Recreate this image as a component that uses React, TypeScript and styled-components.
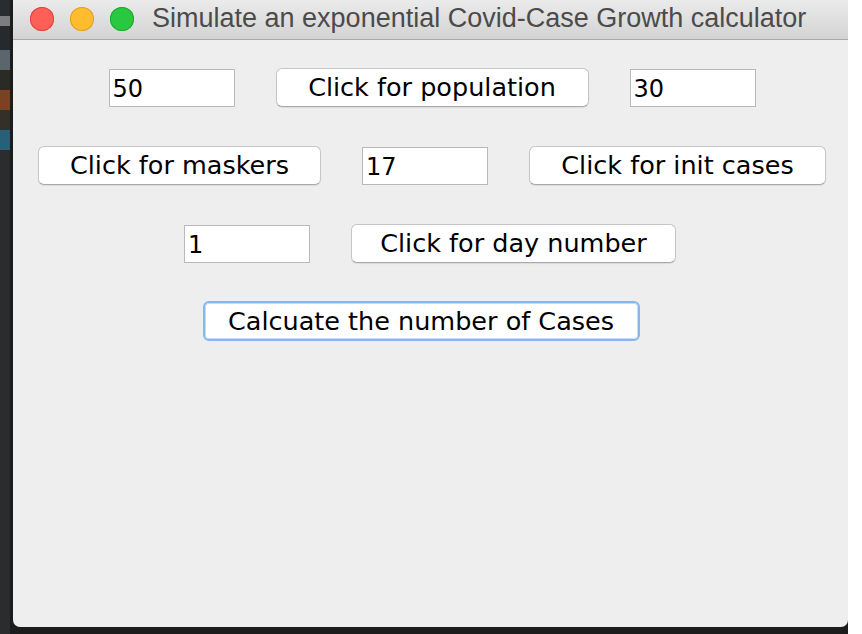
import React from "react";
import styled, { createGlobalStyle } from "styled-components";

const Global = createGlobalStyle`
  html, body { margin: 0; padding: 0; background: #ffffff; overflow: hidden; }
  #root { width: 862px; height: 634px; }
`;

const Desktop = styled.div`
  display: flex;
  width: 848px;
  height: 634px;
  background: #1c1c1c;
  align-items: flex-start;
`;

const SideStrip = styled.div`
  width: 10px;
  height: 634px;
  margin-right: 3px;
  background: linear-gradient(
    to bottom,
    #2a2d2f 0px, #2a2d2f 16px,
    #7b7d7f 16px, #7b7d7f 26px,
    #262a2c 26px, #262a2c 50px,
    #5a666b 50px, #5a666b 70px,
    #2b2a24 70px, #2b2a24 90px,
    #7a4220 90px, #7a4220 110px,
    #332f29 110px, #332f29 130px,
    #28607a 130px, #28607a 150px,
    #2a2c2e 150px, #2a2c2e 634px
  );
`;

const Window = styled.div`
  flex: 1;
  height: 627px;
  display: flex;
  flex-direction: column;
  border-radius: 0 0 7px 7px;
  overflow: hidden;
  background: #eeeeee;
`;

const TitleBar = styled.div`
  height: 39px;
  flex: none;
  display: flex;
  align-items: center;
  padding-left: 17px;
  background: linear-gradient(to bottom, #ebebeb, #d3d3d3);
  border-bottom: 1px solid #a9a9a9;
`;

const Lights = styled.div`
  display: flex;
  gap: 16px;
  margin-right: 18px;
  margin-top: -2px;
`;

const Light = styled.span<{ $c: string; $b: string }>`
  width: 24px;
  height: 24px;
  border-radius: 50%;
  background: ${(p) => p.$c};
  box-shadow: inset 0 0 0 1px ${(p) => p.$b};
`;

const Title = styled.div`
  font-family: "Liberation Sans", Arial, sans-serif;
  font-size: 27px;
  color: #4b4b4b;
  white-space: nowrap;
  margin-top: -2px;
`;

const Content = styled.div`
  flex: 1;
  display: flex;
  flex-direction: column;
  gap: 38px;
  padding-top: 27px;
  padding-left: 3px;
`;

const Row = styled.div<{ $shift?: number }>`
  display: flex;
  justify-content: center;
  align-items: center;
  gap: 41px;
  height: 40px;
  padding-right: ${(p) => p.$shift ?? 0}px;
`;

const Field = styled.input`
  box-sizing: border-box;
  width: 126px;
  height: 38px;
  margin-top: 2px;
  border: 1px solid #b8b8b8;
  background: #ffffff;
  padding: 2px 0 0 3px;
  font-family: "DejaVu Sans", "Noto Sans", sans-serif;
  font-size: 24px;
  color: #000;
  outline: none;
`;

const Button = styled.button<{ $w: number; $focus?: boolean }>`
  box-sizing: border-box;
  width: ${(p) => p.$w}px;
  height: ${(p) => (p.$focus ? 40 : 39)}px;
  background: #ffffff;
  border: ${(p) => (p.$focus ? "2px solid #88b6ef" : "1px solid #c6c6c6")};
  border-bottom-color: ${(p) => (p.$focus ? "#88b6ef" : "#a9a9a9")};
  border-radius: 6px;
  box-shadow: ${(p) => (p.$focus ? "inset 0 0 0 1px #c6dbf6" : "0 1px 1px rgba(0,0,0,0.08)")};
  font-family: "DejaVu Sans", "Noto Sans", sans-serif;
  font-size: 25.5px;
  color: #000;
  padding: 0;
  display: flex;
  align-items: center;
  justify-content: center;
  white-space: nowrap;
`;

export default function App() {
  return (
    <>
      <Global />
      <Desktop>
        <SideStrip />
        <Window>
          <TitleBar>
            <Lights>
              <Light $c="#fe5f57" $b="#e0443e" />
              <Light $c="#febc2e" $b="#dea123" />
              <Light $c="#28c840" $b="#1aab29" />
            </Lights>
            <Title>Simulate an exponential Covid-Case Growth calculator</Title>
          </TitleBar>
          <Content>
            <Row>
              <Field defaultValue="50" />
              <Button $w={313}>Click for population</Button>
              <Field defaultValue="30" />
            </Row>
            <Row>
              <Button $w={283}>Click for maskers</Button>
              <Field defaultValue="17" />
              <Button $w={297}>Click for init cases</Button>
            </Row>
            <Row $shift={4}>
              <Field defaultValue="1" />
              <Button $w={325}>Click for day number</Button>
            </Row>
            <Row $shift={22}>
              <Button $w={437} $focus>
                Calcuate the number of Cases
              </Button>
            </Row>
          </Content>
        </Window>
      </Desktop>
    </>
  );
}
